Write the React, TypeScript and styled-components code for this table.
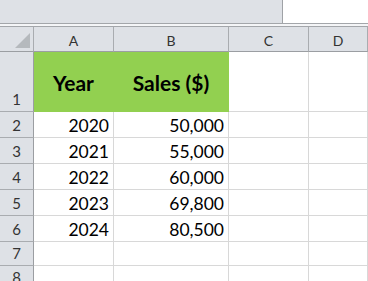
import React from "react";
import styled, { createGlobalStyle, css } from "styled-components";

const GlobalStyle = createGlobalStyle`
  html, body {
    margin: 0;
    padding: 0;
    background: #ffffff;
    overflow: hidden;
  }
  body {
    font-family: Lato, "Liberation Sans", sans-serif;
  }
`;

const HEADER_BG = "#dee1e6";
const HEADER_LINE = "#a9acb0";
const GRID_LINE = "#d8d8d8";
const GREEN = "#92d050";
const COLS = "34px 80px 115px 80px 1fr";

const Sheet = styled.div`
  width: 368px;
  height: 281px;
  display: flex;
  flex-direction: column;
  overflow: hidden;
`;

const FormulaBar = styled.div`
  display: flex;
  height: 23px;
  flex: none;
`;

const NameArea = styled.div`
  width: 282px;
  background: ${HEADER_BG};
  border-right: 1px solid #9fa2a6;
`;

const InputArea = styled.div`
  flex: 1;
  background: #ffffff;
`;

const Splitter = styled.div`
  height: 2px;
  flex: none;
  background: #f4f5f7;
  border-top: 1px solid #a3a6aa;
  border-bottom: 1px solid #a3a6aa;
`;

const Row = styled.div<{ $h: number }>`
  display: grid;
  grid-template-columns: ${COLS};
  height: ${(p) => p.$h}px;
  flex: none;
`;

const Corner = styled.div`
  background: ${HEADER_BG};
  border-right: 1px solid ${HEADER_LINE};
  border-bottom: 1px solid #9b9ea2;
  display: flex;
  justify-content: flex-end;
  align-items: flex-end;
  padding: 0 3px 3px 0;
`;

const ColHeader = styled.div`
  background: ${HEADER_BG};
  border-right: 1px solid ${HEADER_LINE};
  border-bottom: 1px solid #9b9ea2;
  color: #333333;
  font-size: 14px;
  display: flex;
  justify-content: center;
  align-items: flex-end;
  padding-bottom: 3px;
  line-height: 1;
`;

const RowHeader = styled.div`
  background: ${HEADER_BG};
  border-right: 1px solid #9b9ea2;
  border-bottom: 1px solid ${HEADER_LINE};
  color: #333333;
  font-size: 15px;
  display: flex;
  justify-content: center;
  align-items: flex-end;
  padding-bottom: 4px;
  line-height: 1;
`;

const Cell = styled.div<{ $title?: boolean }>`
  border-right: 1px solid ${GRID_LINE};
  border-bottom: 1px solid ${GRID_LINE};
  color: #000000;
  font-size: 17.5px;
  display: flex;
  justify-content: flex-end;
  align-items: flex-end;
  padding: 0 4px 3px 0;
  line-height: 1;
  ${(p) =>
    p.$title &&
    css`
      background: ${GREEN};
      border-color: ${GREEN};
      font-weight: 700;
      font-size: 21px;
      justify-content: center;
      align-items: center;
      padding: 1px 0 0 0;
    `}
`;

const data: [number, string][] = [
  [2020, "50,000"],
  [2021, "55,000"],
  [2022, "60,000"],
  [2023, "69,800"],
  [2024, "80,500"],
];

const SelectAll = () => (
  <svg width="15" height="15" viewBox="0 0 15 15">
    <polygon points="15,0 15,15 0,15" fill="#b5b9bd" />
  </svg>
);

export default function App() {
  return (
    <>
      <GlobalStyle />
      <Sheet>
        <FormulaBar>
          <NameArea />
          <InputArea />
        </FormulaBar>
        <Splitter />
        <Row $h={25}>
          <Corner>
            <SelectAll />
          </Corner>
          <ColHeader>A</ColHeader>
          <ColHeader>B</ColHeader>
          <ColHeader>C</ColHeader>
          <ColHeader>D</ColHeader>
        </Row>
        <Row $h={60}>
          <RowHeader>1</RowHeader>
          <Cell $title>Year</Cell>
          <Cell $title>Sales ($)</Cell>
          <Cell />
          <Cell />
        </Row>
        {data.map(([year, sales], i) => (
          <Row $h={26} key={year}>
            <RowHeader>{i + 2}</RowHeader>
            <Cell>{year}</Cell>
            <Cell>{sales}</Cell>
            <Cell />
            <Cell />
          </Row>
        ))}
        <Row $h={24}>
          <RowHeader>7</RowHeader>
          <Cell />
          <Cell />
          <Cell />
          <Cell />
        </Row>
        <Row $h={24}>
          <RowHeader>8</RowHeader>
          <Cell />
          <Cell />
          <Cell />
          <Cell />
        </Row>
      </Sheet>
    </>
  );
}
